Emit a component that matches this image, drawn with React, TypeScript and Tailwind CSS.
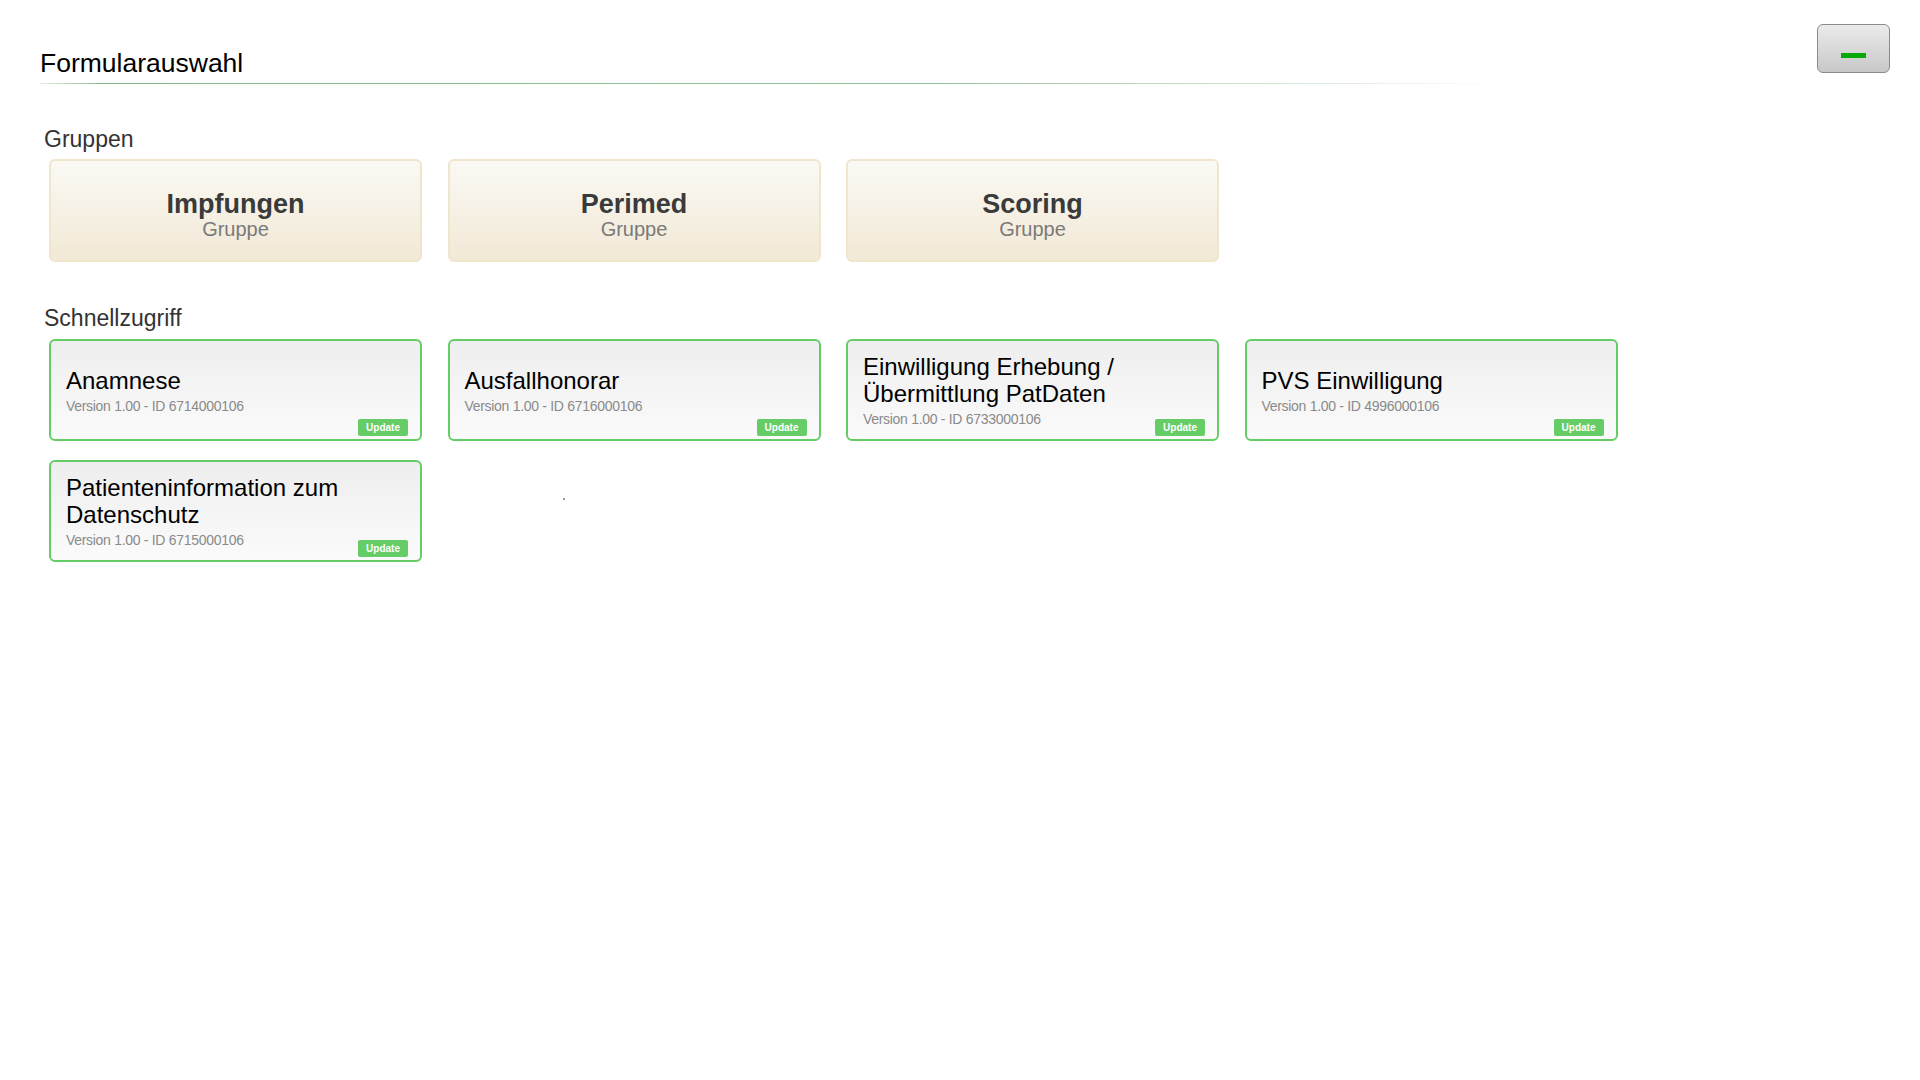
const groups = ["Impfungen", "Perimed", "Scoring"];

const forms = [
  { title: "Anamnese", id: "6714000106" },
  { title: "Ausfallhonorar", id: "6716000106" },
  { title: "Einwilligung Erhebung / Übermittlung PatDaten", id: "6733000106" },
  { title: "PVS Einwilligung", id: "4996000106" },
  { title: "Patienteninformation zum Datenschutz", id: "6715000106" },
];

function GroupCard({ name }: { name: string }) {
  return (
    <div className="w-[373px] h-[103px] rounded-[6px] border-2 border-[#f0e5cd] bg-gradient-to-b from-[#faf9f4] to-[#f2e9d6] flex flex-col items-center pt-[29px]">
      <div className="text-[27px] leading-[28px] font-bold text-[#3a3a3a]">{name}</div>
      <div className="text-[20px] leading-[22px] text-[#7a7a7a]">Gruppe</div>
    </div>
  );
}

function FormCard({ title, id }: { title: string; id: string }) {
  return (
    <div className="relative w-[373px] h-[102px] rounded-[6px] border-2 border-[#66cc66] bg-gradient-to-b from-[#eeeeee] to-[#fbfbfb] flex flex-col justify-center pl-[15px] pr-[20px] pt-[2px]">
      <div className="text-[24px] leading-[27px] text-black">{title}</div>
      <div className="mt-[2px] text-[14px] leading-[20px] tracking-[-0.3px] text-[#8a8a8a]">
        Version 1.00 - ID {id}
      </div>
      <span className="absolute right-[12px] bottom-[3px] w-[50px] h-[17px] rounded-[2px] bg-[#66cc66] text-white text-[10px] font-bold leading-[17px] text-center">
        Update
      </span>
    </div>
  );
}

export default function App() {
  return (
    <div className="relative min-h-screen bg-white font-['Liberation_Sans',Arial,sans-serif]">
      {/* Header */}
      <div className="flex items-start justify-between pt-[24px] pl-[40px] pr-[30px]">
        <h1 className="mt-[24px] text-[26.5px] leading-[30px] text-black">Formularauswahl</h1>
        <button className="w-[73px] h-[49px] rounded-[6px] border border-[#8a8a8a] bg-gradient-to-b from-[#ebebeb] to-[#c8c8c8] flex justify-center pt-[28px]">
          <span className="block w-[25px] h-[5px] bg-[#08a808]" />
        </button>
      </div>
      <div className="ml-[40px] mt-[5px] w-[1460px] h-[1px] bg-[linear-gradient(to_right,#e6eee6_0%,#88bb88_4%,#8fc08f_60%,rgba(255,255,255,0)_100%)]" />

      {/* Gruppen */}
      <div className="ml-[44px] mt-[42px] text-[23px] leading-[26px] text-[#333333]">Gruppen</div>
      <div className="ml-[49px] mt-[7px] flex gap-[25.5px]">
        {groups.map((g) => (
          <GroupCard key={g} name={g} />
        ))}
      </div>

      {/* Schnellzugriff */}
      <div className="ml-[44px] mt-[43px] text-[23px] leading-[26px] text-[#333333]">Schnellzugriff</div>
      <div className="ml-[49px] mt-[8px] w-[1600px] flex flex-wrap gap-x-[25.5px] gap-y-[19px]">
        {forms.map((f) => (
          <FormCard key={f.id} title={f.title} id={f.id} />
        ))}
      </div>

      <span className="absolute left-[563px] top-[498px] w-[2px] h-[2px] bg-[#9a9a9a]" />
    </div>
  );
}
